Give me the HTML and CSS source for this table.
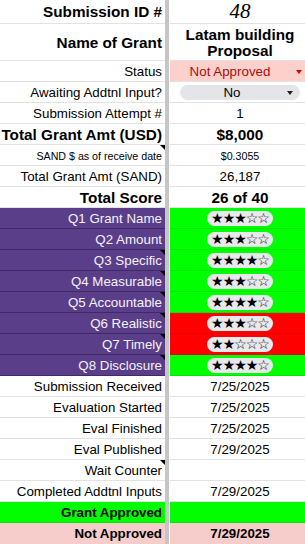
FILE: index.html
```html
<!DOCTYPE html>
<html>
<head>
<meta charset="utf-8">
<link rel="stylesheet" href="styles.css">
</head>
<body>
<div class="sheet">
  <div class="divider"></div>

  <div class="cell l big top">Submission ID #</div>
  <div class="cell r id top">48</div>

  <div class="cell l big">Name of Grant</div>
  <div class="cell r big name">Latam building<br>Proposal</div>

  <div class="cell l">Status</div>
  <div class="cell r status"><span class="status-text">Not Approved</span><span class="caret red"></span></div>

  <div class="cell l">Awaiting Addtnl Input?</div>
  <div class="cell r start"><span class="pill"><span class="pill-text">No</span><span class="caret black"></span></span></div>

  <div class="cell l">Submission Attempt #</div>
  <div class="cell r">1</div>

  <div class="cell l big">Total Grant Amt (USD)</div>
  <div class="cell r big">$8,000</div>

  <div class="cell l small note">SAND $ as of receive date</div>
  <div class="cell r small">$0.3055</div>

  <div class="cell l">Total Grant Amt (SAND)</div>
  <div class="cell r">26,187</div>

  <div class="cell l big">Total Score</div>
  <div class="cell r big">26 of 40</div>

  <div class="cell l q">Q1 Grant Name</div>
  <div class="cell r green"><span class="chip">★★★☆☆</span></div>

  <div class="cell l q">Q2 Amount</div>
  <div class="cell r green"><span class="chip">★★★☆☆</span></div>

  <div class="cell l q note">Q3 Specific</div>
  <div class="cell r green"><span class="chip">★★★★☆</span></div>

  <div class="cell l q note">Q4 Measurable</div>
  <div class="cell r green"><span class="chip">★★★☆☆</span></div>

  <div class="cell l q note">Q5 Accountable</div>
  <div class="cell r green"><span class="chip">★★★★☆</span></div>

  <div class="cell l q note">Q6 Realistic</div>
  <div class="cell r red-bg"><span class="chip">★★★☆☆</span></div>

  <div class="cell l q note">Q7 Timely</div>
  <div class="cell r red-bg"><span class="chip">★★☆☆☆</span></div>

  <div class="cell l q note">Q8 Disclosure</div>
  <div class="cell r green"><span class="chip">★★★★☆</span></div>

  <div class="cell l">Submission Received</div>
  <div class="cell r">7/25/2025</div>

  <div class="cell l">Evaluation Started</div>
  <div class="cell r">7/25/2025</div>

  <div class="cell l">Eval Finished</div>
  <div class="cell r">7/25/2025</div>

  <div class="cell l">Eval Published</div>
  <div class="cell r">7/29/2025</div>

  <div class="cell l note">Wait Counter</div>
  <div class="cell r"></div>

  <div class="cell l">Completed Addtnl Inputs</div>
  <div class="cell r">7/29/2025</div>

  <div class="cell l bold green">Grant Approved</div>
  <div class="cell r green"></div>

  <div class="cell l bold pink">Not Approved</div>
  <div class="cell r bold pink">7/29/2025</div>
</div>
</body>
</html>
```

FILE: styles.css
```css
html, body {
  margin: 0;
  padding: 0;
  width: 305px;
  height: 544px;
  overflow: hidden;
  background: #fff;
}

body {
  font-family: "Liberation Sans", Arial, sans-serif;
  font-size: 13.33px;
  color: #000;
}

.sheet {
  width: 310px;
  display: grid;
  grid-template-columns: 165px 5px 140px;
  grid-template-rows: 24px 37px repeat(23, 21px);
}

.divider {
  grid-column: 2;
  grid-row: 1 / -1;
  background: #c6c6c6;
  border-right: 1px solid #fff;
}

.cell {
  box-sizing: border-box;
  border-bottom: 1px solid #e2e2e2;
  display: flex;
  align-items: center;
  overflow: hidden;
  white-space: nowrap;
  position: relative;
  padding-top: 1px;
}

.cell.top {
  padding-top: 0;
}

.l {
  grid-column: 1;
  justify-content: flex-end;
  padding-right: 3px;
}

.r {
  grid-column: 3;
  justify-content: center;
}

.r.start {
  justify-content: flex-start;
}

.big {
  font-weight: bold;
  font-size: 15.3px;
}

.bold {
  font-weight: bold;
}

.small {
  font-size: 10.67px;
}

.id {
  font-family: "Liberation Serif", serif;
  font-style: italic;
  font-size: 21px;
}

.name {
  white-space: normal;
  text-align: center;
  line-height: 16px;
}

.note::after {
  content: "";
  position: absolute;
  top: 0;
  right: 0;
  border-top: 5px solid #000;
  border-left: 5px solid transparent;
}

.q {
  background: #5a3e89;
  color: #f4f2f8;
  border-bottom-color: #3f2b63;
}

.green {
  background: #00ff00;
  border-bottom-color: #00e800;
}

.red-bg {
  background: #ff0000;
  border-bottom-color: #e80000;
}

.pink {
  background: #f6cdca;
  border-bottom-color: #f6cdca;
}

.status {
  background: #fdd0cb;
  justify-content: flex-start;
  color: #a50e0e;
}

.status-text {
  width: 120px;
  text-align: center;
}

.caret {
  width: 0;
  height: 0;
  border-left: 3px solid transparent;
  border-right: 3px solid transparent;
}

.caret.red {
  margin-left: 6px;
  border-top: 4px solid #d60000;
}

.caret.black {
  margin-left: 3px;
  border-top: 4px solid #1f1f1f;
}

.pill {
  margin-left: 10px;
  width: 120px;
  height: 15px;
  border-radius: 8px;
  background: #e3e5e8;
  display: flex;
  align-items: center;
}

.pill-text {
  width: 104px;
  text-align: center;
}

.chip {
  width: 66px;
  height: 15px;
  border-radius: 8px;
  background: #e8e9ec;
  display: flex;
  align-items: center;
  justify-content: center;
  font-family: "DejaVu Sans", sans-serif;
  font-size: 14px;
  letter-spacing: -1px;
  line-height: 15px;
  color: #000;
}
```
